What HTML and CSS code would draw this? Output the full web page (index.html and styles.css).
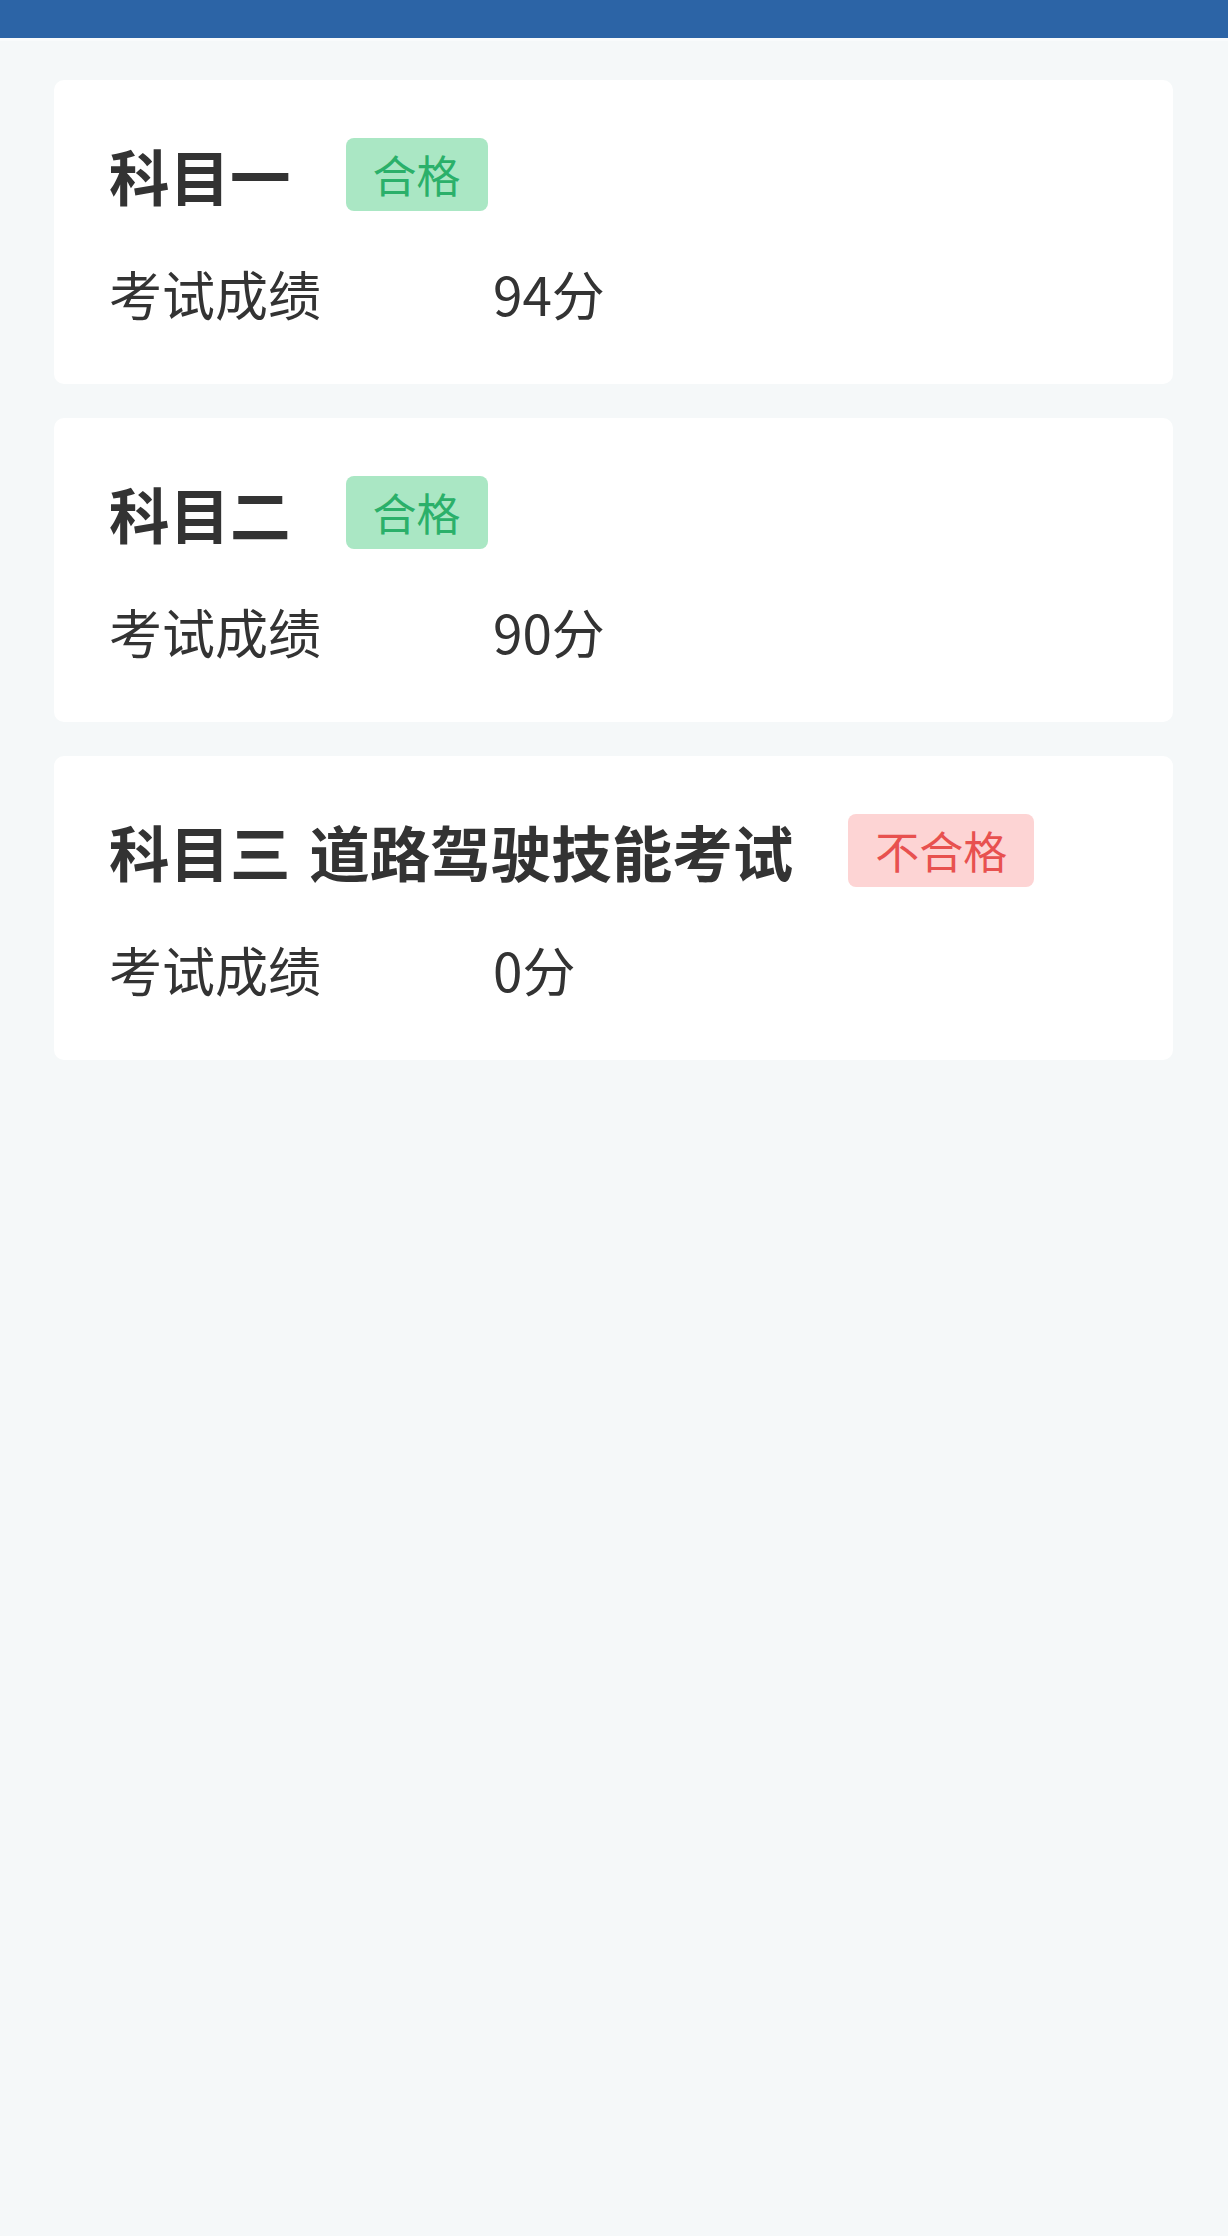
FILE: index.html
```html
<!DOCTYPE html>
<html lang="zh-CN">
<head>
<meta charset="utf-8">
<title>考试成绩</title>
<link rel="stylesheet" href="styles.css">
</head>
<body>
<header class="topbar"></header>
<main class="list">
  <section class="card">
    <div class="card-head">
      <h2 class="card-title">科目一</h2>
      <span class="tag tag-pass">合格</span>
    </div>
    <div class="score-row">
      <span class="score-label">考试成绩</span>
      <span class="score-value">94分</span>
    </div>
  </section>
  <section class="card">
    <div class="card-head">
      <h2 class="card-title">科目二</h2>
      <span class="tag tag-pass">合格</span>
    </div>
    <div class="score-row">
      <span class="score-label">考试成绩</span>
      <span class="score-value">90分</span>
    </div>
  </section>
  <section class="card">
    <div class="card-head">
      <h2 class="card-title">科目三 道路驾驶技能考试</h2>
      <span class="tag tag-fail">不合格</span>
    </div>
    <div class="score-row">
      <span class="score-label">考试成绩</span>
      <span class="score-value">0分</span>
    </div>
  </section>
</main>
</body>
</html>
```

FILE: styles.css
```css
html, body {
  margin: 0;
  padding: 0;
}
body {
  background: #f5f8f9;
  font-family: "Noto Sans CJK SC", "Noto Sans", sans-serif;
  color: #333333;
  min-height: 2236px;
}
.topbar {
  height: 38px;
  background: #2c64a6;
  border-bottom: 3px solid #f9fbfc;
}
.list {
  display: flex;
  flex-direction: column;
  gap: 34px;
  padding: 39px 55px 0 54px;
}
.card {
  background: #ffffff;
  border-radius: 10px;
  padding: 58px 55px 53px 55px;
  display: flex;
  flex-direction: column;
  gap: 44px;
}
.card-head {
  display: flex;
  align-items: center;
  height: 73px;
}
.card-title {
  margin: 0;
  font-size: 60.5px;
  line-height: 73px;
  font-weight: 700;
  word-spacing: 5px;
  color: #333333;
}
.tag {
  margin-left: 55px;
  height: 73px;
  line-height: 73px;
  padding: 0 27px;
  font-size: 44px;
  border-radius: 8px;
}
.tag-pass {
  background: #aae7c4;
  color: #2bb06a;
}
.tag-fail {
  background: #fdd4d4;
  color: #e8514f;
}
.score-row {
  display: grid;
  grid-template-columns: 384px 1fr;
  font-size: 53px;
  line-height: 76px;
  color: #333333;
}
```
